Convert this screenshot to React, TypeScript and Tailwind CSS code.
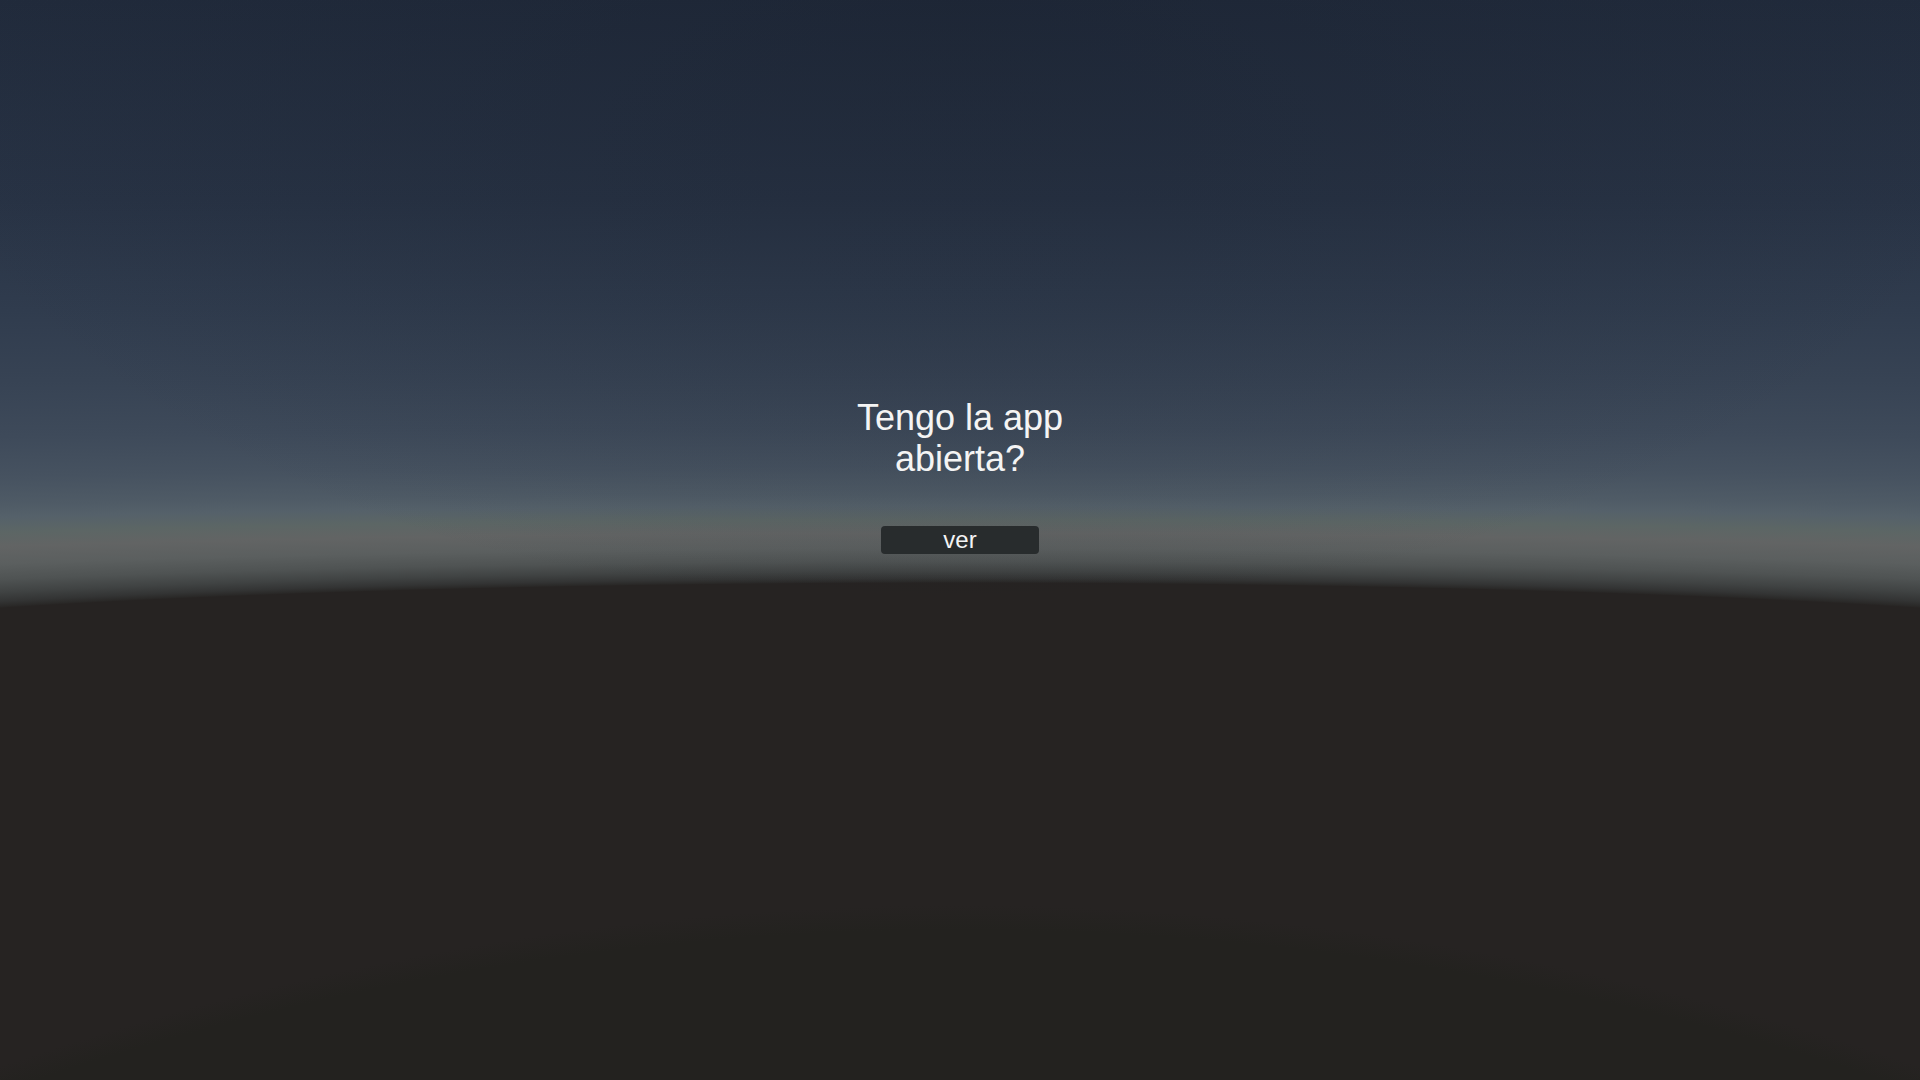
export default function App() {
  return (
    <div
      className="min-h-screen w-full flex flex-col items-center bg-[#262322] bg-no-repeat pt-[397px] [font-family:'Liberation_Sans',Arial,sans-serif] [background-image:radial-gradient(circle_2935px_at_50%_3845px,#23221f_2915px,rgba(35,34,31,0)_2940px),radial-gradient(ellipse_1100px_620px_at_50%_0%,rgba(20,26,38,0.3),rgba(20,26,38,0)),radial-gradient(1300px_77px_at_50%_660px,#262322_0%,#262322_100%,#2a2928_101.5%,#333434_106%,#404343_115%,#4f5353_128%,#5b5f5f_145%,#626464_165%,#5c6665_182%,#55616a_200%,#4f5b66_215%,#465260_250%,#3e4a5a_300%,#374354_370%,#303c4e_460%,#283345_600%,#212b3c_860%)] [background-size:auto,auto,100%_660px]"
    >
      {/* Prompt headline */}
      <h1 className="max-w-[240px] text-center text-[36px] leading-[41px] font-normal text-[#f4f4f4]">
        Tengo la app abierta?
      </h1>

      {/* Action button */}
      <button
        type="button"
        className="mt-[47px] w-[158px] h-[28px] rounded-[4px] bg-[#282c2d] text-[24px] leading-[28px] text-[#f4f4f4] text-center cursor-pointer"
      >
        ver
      </button>
    </div>
  );
}
